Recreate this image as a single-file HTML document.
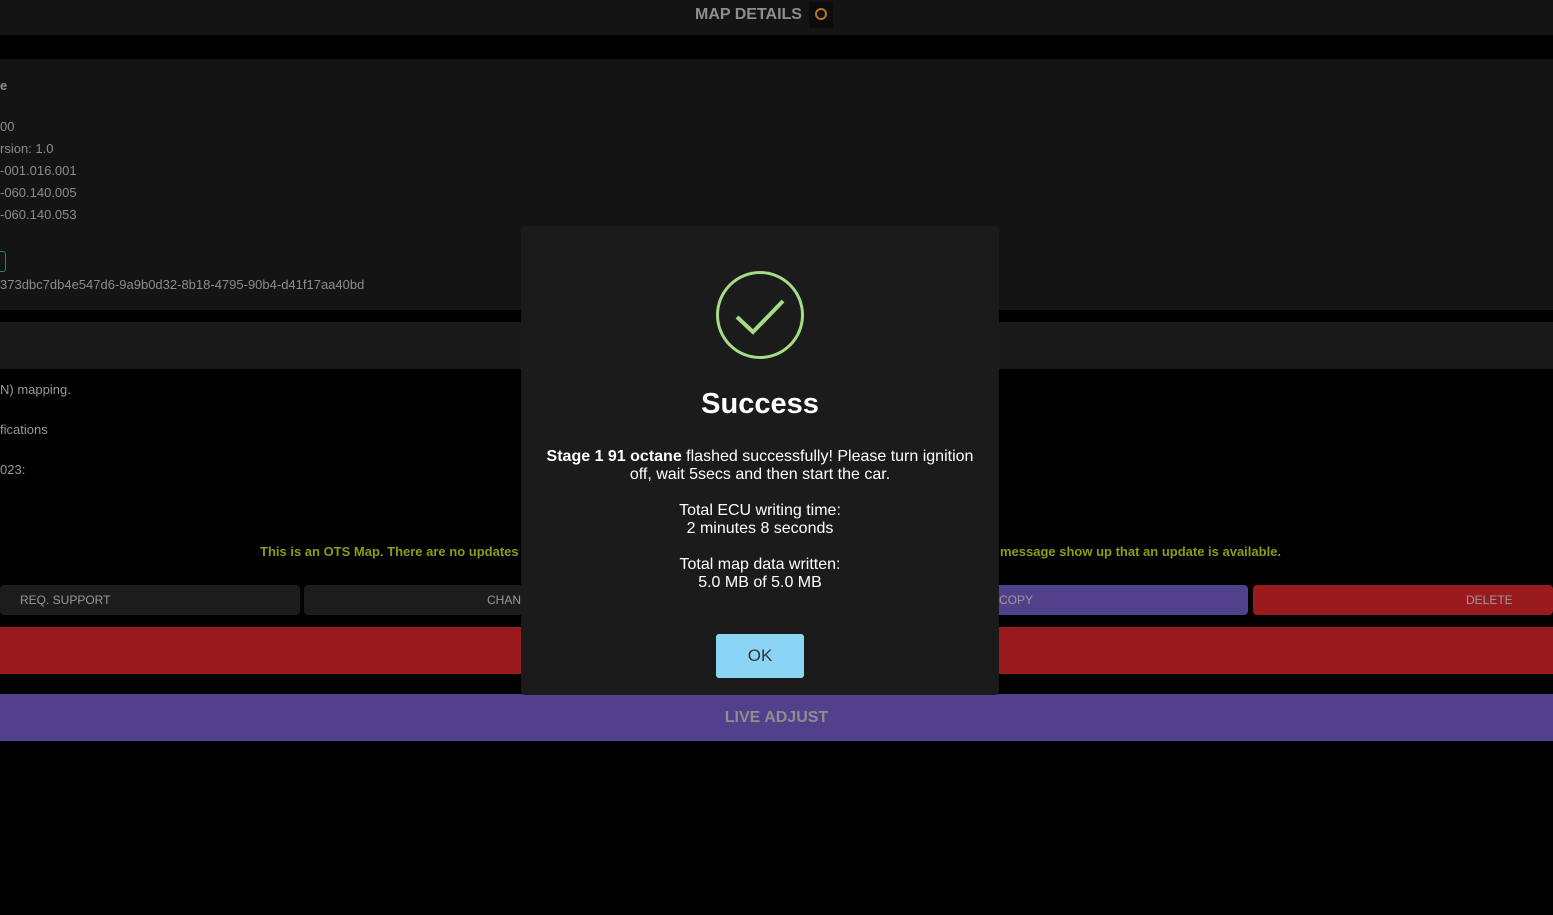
<!DOCTYPE html>
<html><head><style>
body{margin:0;width:1553px;height:915px;background:#000;font-family:"Liberation Sans",sans-serif;position:relative;overflow:hidden;color:#8a8a8a}
div{position:absolute;box-sizing:border-box}
.t{font-size:13px;color:#8c8c8c;white-space:nowrap}
.btn{top:585px;height:30px;border-radius:4px;font-size:12px;color:#9a9a9a;line-height:30px}
</style></head><body>
<div style="left:0;top:0;width:1553px;height:35px;background:#141414"></div>
<div style="left:695px;top:6px;font-size:16px;font-weight:bold;color:#8e8e8e">MAP DETAILS</div>
<div style="left:809px;top:2px;width:24px;height:26px;background:#0c0c0c"></div>
<div style="left:815px;top:8px;width:12px;height:12px;border:2px solid #b8741a;border-radius:50%"></div>
<div style="left:0;top:59px;width:1553px;height:251px;background:#141414"></div>
<div class="t" style="left:0;top:78px;font-weight:bold">e</div>
<div class="t" style="left:0;top:119px">00</div>
<div class="t" style="left:0;top:141px">rsion: 1.0</div>
<div class="t" style="left:0;top:163px">-001.016.001</div>
<div class="t" style="left:0;top:185px">-060.140.005</div>
<div class="t" style="left:0;top:207px">-060.140.053</div>
<div style="left:-6px;top:251px;width:12px;height:21px;border:1px solid #2a8a3a;border-radius:3px"></div>
<div class="t" style="left:0;top:277px">373dbc7db4e547d6-9a9b0d32-8b18-4795-90b4-d41f17aa40bd</div>
<div style="left:0;top:322px;width:1553px;height:47px;background:#191919"></div>
<div class="t" style="left:0;top:382px;color:#999">N) mapping.</div>
<div class="t" style="left:0;top:422px;color:#999">fications</div>
<div class="t" style="left:0;top:462px;color:#999">023:</div>
<div style="left:260px;top:544px;font-size:13px;font-weight:bold;color:#8f9a12">This is an OTS Map. There are no updates</div>
<div style="left:1000px;top:544px;font-size:13px;font-weight:bold;color:#8f9a12">message show up that an update is available.</div>
<div class="btn" style="left:0;width:300px;background:#1c1c1c;padding-left:20px">REQ. SUPPORT</div>
<div class="btn" style="left:304px;width:440px;background:#1c1c1c;padding-left:183px">CHANGELOG</div>
<div class="btn" style="left:948px;width:300px;background:#51408c;padding-left:51px">COPY</div>
<div class="btn" style="left:1253px;width:300px;background:#9a1b1e;padding-left:213px">DELETE</div>
<div style="left:0;top:627px;width:1553px;height:47px;background:#9a1b1e"></div>
<div style="left:0;top:694px;width:1553px;height:47px;background:#51408c;text-align:center;line-height:47px;font-size:16px;font-weight:bold;color:#8e8e8e">LIVE ADJUST</div>
<div style="left:521px;top:226px;width:478px;height:469px;background:#1b1b1b;border-radius:4px;text-align:center;color:#fff">
<svg style="position:absolute;left:194px;top:44px" width="90" height="90" viewBox="0 0 90 90"><circle cx="45" cy="45" r="42.5" fill="none" stroke="#a5dc86" stroke-width="3"/><path d="M22 47 L38 62 L68 31" fill="none" stroke="#a5dc86" stroke-width="4"/></svg>
<div style="left:0;width:478px;top:162px;font-size:29px;font-weight:bold">Success</div>
<div style="left:20px;width:438px;top:222px;font-size:16px;line-height:18px">
<b>Stage 1 91 octane</b> flashed successfully! Please turn ignition off, wait 5secs and then start the car.<br><br>Total ECU writing time:<br>2 minutes 8 seconds<br><br>Total map data written:<br>5.0 MB of 5.0 MB</div>
<div style="left:195px;top:408px;width:88px;height:44px;background:#8cd4f5;border-radius:3px;color:#333;font-size:17px;line-height:44px">OK</div>
</div>
</body></html>
